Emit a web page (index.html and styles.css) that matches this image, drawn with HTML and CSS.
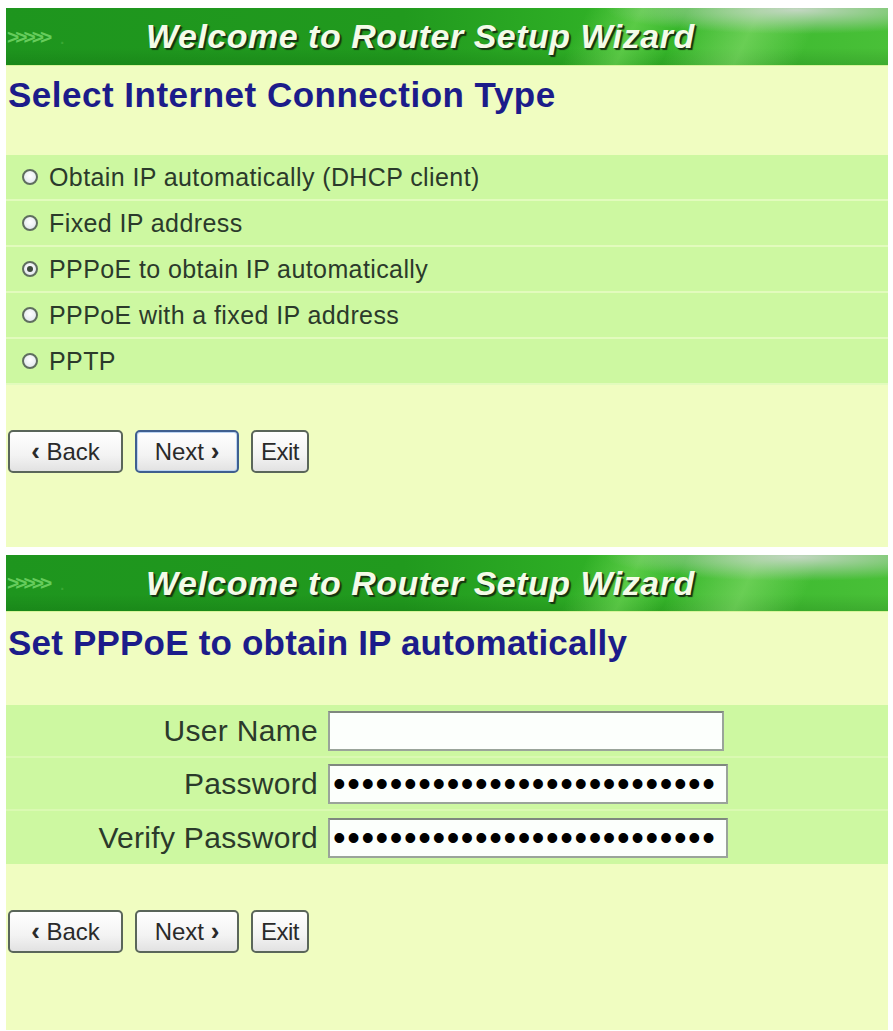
FILE: index.html
```html
<!DOCTYPE html>
<html lang="en">
<head>
    <meta charset="UTF-8">
    <meta name="viewport" content="width=device-width, initial-scale=1.0">
    <title>Router Setup Wizard</title>
    <link rel="stylesheet" href="styles.css">
</head>
<body>
    <div class="page">
        <div class="wizard">
            <div class="wizard-header">
                <span class="arrows">&gt;&gt;&gt;&gt;&gt;<span class="dot">.</span></span>
                <span class="header-text">Welcome to Router Setup Wizard</span>
            </div>
            <h2 class="wizard-title">Select Internet Connection Type</h2>
            <div class="options">
                <label class="option"><input type="radio" name="wan"> Obtain IP automatically (DHCP client)</label>
                <label class="option"><input type="radio" name="wan"> Fixed IP address</label>
                <label class="option"><input type="radio" name="wan" checked> PPPoE to obtain IP automatically</label>
                <label class="option"><input type="radio" name="wan"> PPPoE with a fixed IP address</label>
                <label class="option"><input type="radio" name="wan"> PPTP</label>
            </div>
            <div class="button-row">
                <button class="btn btn-back"><b>&lsaquo;</b> Back</button>
                <button class="btn btn-next focused">Next <b>&rsaquo;</b></button>
                <button class="btn btn-exit">Exit</button>
            </div>
        </div>

        <div class="wizard">
            <div class="wizard-header">
                <span class="arrows">&gt;&gt;&gt;&gt;&gt;<span class="dot">.</span></span>
                <span class="header-text">Welcome to Router Setup Wizard</span>
            </div>
            <h2 class="wizard-title second">Set PPPoE to obtain IP automatically</h2>
            <div class="form-table">
                <div class="form-row">
                    <span class="form-label">User Name</span>
                    <input class="field short" type="text">
                </div>
                <div class="form-row">
                    <span class="form-label">Password</span>
                    <input class="field" type="password" value="passwordpasswordpassword123">
                </div>
                <div class="form-row">
                    <span class="form-label">Verify Password</span>
                    <input class="field" type="password" value="passwordpasswordpassword123">
                </div>
            </div>
            <div class="button-row second">
                <button class="btn btn-back"><b>&lsaquo;</b> Back</button>
                <button class="btn btn-next">Next <b>&rsaquo;</b></button>
                <button class="btn btn-exit">Exit</button>
            </div>
        </div>
    </div>
</body>
</html>
```

FILE: styles.css
```css
body {
    margin: 0;
    background-color: #fff;
    font-family: "Liberation Sans", Arial, sans-serif;
    color: #2b3a2b;
}
.page {
    padding: 8px 5px 0 6px;
}
.wizard {
    background-color: #f0fdc1;
    padding-bottom: 74px;
    margin-bottom: 8px;
}
.wizard + .wizard {
    padding-bottom: 77px;
    margin-bottom: 0;
}
.wizard-header {
    height: 58px;
    display: flex;
    align-items: center;
    border-bottom: 1px solid #d8f59a;
    box-sizing: border-box;
    background:
        radial-gradient(ellipse 190px 24px at 790px 2px, rgba(200, 215, 200, 0.95), rgba(200, 215, 200, 0) 100%),
        linear-gradient(116deg, rgba(60, 190, 40, 0) 64%, rgba(130, 225, 100, 0.5) 70%, rgba(60, 190, 40, 0) 75%, rgba(160, 232, 130, 0.45) 83%, rgba(60, 190, 40, 0) 90%),
        linear-gradient(to bottom, rgba(255, 255, 255, 0) 70%, rgba(0, 60, 0, 0.15) 100%),
        linear-gradient(to right, #1e951e 0%, #219a1e 45%, #33b528 72%, #49c038 100%);
}
.wizard + .wizard .wizard-header {
    height: 57px;
}
.arrows {
    width: 139px;
    padding-left: 1px;
    font-size: 21px;
    font-weight: bold;
    color: #66cc5c;
    letter-spacing: -4px;
}
.arrows .dot {
    margin-left: 12px;
    font-size: 14px;
    color: #3aa834;
}
.header-text {
    font-size: 34px;
    font-weight: bold;
    font-style: italic;
    color: #f4fbe8;
    letter-spacing: 0.5px;
    text-shadow: 2px 2px 1px #163310, 1px 1px 0 #27501a;
}
.wizard-title {
    margin: 0;
    height: 89px;
    padding: 11px 0 0 2px;
    box-sizing: border-box;
    font-size: 35px;
    line-height: 36px;
    font-weight: bold;
    letter-spacing: 0.5px;
    color: #1c1c8a;
}
.wizard-title.second {
    height: 93px;
    padding-top: 13px;
    letter-spacing: 0.2px;
}
.options {
    display: flex;
    flex-direction: column;
}
.option {
    height: 44px;
    display: flex;
    align-items: center;
    gap: 11px;
    padding-left: 16px;
    background-color: #cdf8a1;
    border-bottom: 2px solid #e2fbbd;
    font-size: 25px;
    letter-spacing: 0.4px;
    cursor: pointer;
}
.option input {
    appearance: none;
    margin: 0;
    width: 16px;
    height: 16px;
    border: 2px solid #5f6e5f;
    border-radius: 50%;
    background: radial-gradient(circle at 50% 40%, #ffffff, #dce2ea);
    box-sizing: border-box;
    display: grid;
    place-items: center;
}
.option input:checked::after {
    content: "";
    width: 6px;
    height: 6px;
    border-radius: 50%;
    background-color: #3d4a3d;
}
.button-row {
    display: flex;
    gap: 12px;
    margin-top: 45px;
    padding-left: 2px;
}
.button-row.second {
    margin-top: 46px;
}
.btn {
    height: 43px;
    padding: 0;
    font-family: "Liberation Sans", Arial, sans-serif;
    font-size: 24px;
    color: #2a2a2a;
    background: linear-gradient(to bottom, #ffffff 0%, #f3f3f3 60%, #e2e2e2 100%);
    border: 2px solid #5a665a;
    border-radius: 5px;
    cursor: pointer;
}
.btn b {
    font-size: 26px;
}
.btn-back {
    width: 115px;
}
.btn-next {
    width: 104px;
}
.btn-exit {
    width: 58px;
    letter-spacing: -0.5px;
}
.btn.focused {
    border-color: #3f5f8f;
    box-shadow: inset 0 0 0 1px #bcd4f2;
}
.form-table {
    display: flex;
    flex-direction: column;
    background-color: #cdf8a1;
}
.form-row {
    height: 51px;
    display: flex;
    align-items: center;
    gap: 10px;
    border-bottom: 2px solid #daf9b2;
}
.form-row:last-child {
    border-bottom: none;
    height: 53px;
}
.form-label {
    width: 312px;
    text-align: right;
    font-size: 30px;
    letter-spacing: 0.3px;
}
.field {
    width: 400px;
    height: 40px;
    margin: 0;
    padding: 0 3px;
    box-sizing: border-box;
    background-color: #fcfffc;
    border: 2px solid #9aa49a;
    border-top-color: #7f887f;
    font-family: "Liberation Sans", Arial, sans-serif;
    font-size: 36px;
    letter-spacing: 1.6px;
    color: #000;
}
.field.short {
    width: 396px;
}
```
